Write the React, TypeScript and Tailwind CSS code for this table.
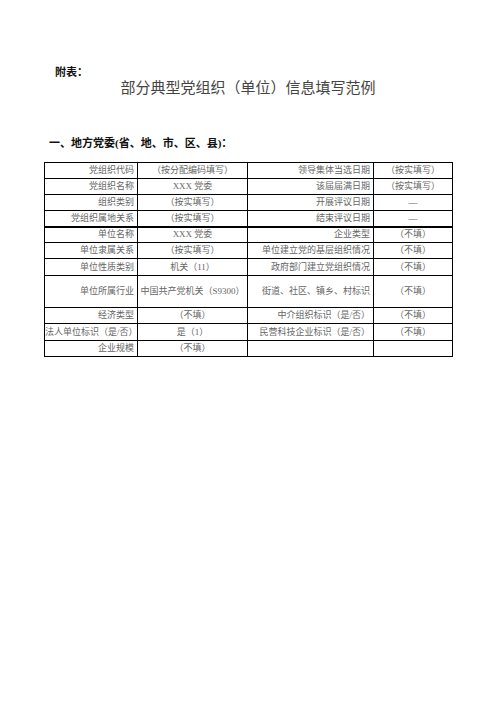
import React from "react";

type Row = { a: string; b: string; c: string; d: string; h: string; thick?: boolean };

const rows: Row[] = [
  { a: "党组织代码", b: "（按分配编码填写）", c: "领导集体当选日期", d: "（按实填写）", h: "h-[16px]" },
  { a: "党组织名称", b: "XXX 党委", c: "该届届满日期", d: "（按实填写）", h: "h-[16px]" },
  { a: "组织类别", b: "（按实填写）", c: "开展评议日期", d: "—", h: "h-[16px]" },
  { a: "党组织属地关系", b: "（按实填写）", c: "结束评议日期", d: "—", h: "h-[16px]" },
  { a: "单位名称", b: "XXX 党委", c: "企业类型", d: "（不填）", h: "h-[16px]", thick: true },
  { a: "单位隶属关系", b: "（按实填写）", c: "单位建立党的基层组织情况", d: "（不填）", h: "h-[16px]" },
  { a: "单位性质类别", b: "机关（11）", c: "政府部门建立党组织情况", d: "（不填）", h: "h-[17px]" },
  { a: "单位所属行业", b: "中国共产党机关（S9300）", c: "街道、社区、镇乡、村标识", d: "（不填）", h: "h-[32px]" },
  { a: "经济类型", b: "（不填）", c: "中介组织标识（是/否）", d: "（不填）", h: "h-[16px]" },
  { a: "法人单位标识（是/否）", b: "是（1）", c: "民营科技企业标识（是/否）", d: "（不填）", h: "h-[17px]" },
  { a: "企业规模", b: "（不填）", c: "", d: "", h: "h-[16px]" },
];

export default function App() {
  const cjk = { fontFamily: '"Liberation Serif", "Noto Sans CJK SC", serif' };
  return (
    <div className="w-[496px] h-[702px] bg-white text-black" style={cjk}>
      <div className="pt-[65px]">
        <div className="pl-[55px] text-[11px] leading-[14px] font-bold text-[#111]">附表：</div>
        <div className="text-center text-[15px] leading-[18px] text-[#444]">
          部分典型党组织（单位）信息填写范例
        </div>
        <div className="pl-[49px] mt-[39px] text-[11px] leading-[14px] font-bold text-[#111]">
          一、地方党委(省、地、市、区、县)：
        </div>
        <div className="pl-[44px] mt-[12px]">
          <table className="border-collapse w-[408px] table-fixed text-[9px] leading-none text-[#666]">
            <colgroup>
              <col className="w-[93px]" />
              <col className="w-[110px]" />
              <col className="w-[126px]" />
              <col className="w-[79px]" />
            </colgroup>
            <tbody>
              {rows.map((r, i) => (
                <tr key={i} className={r.h}>
                  <td className={`border border-black text-right pr-[3px] p-0 whitespace-nowrap ${r.thick ? "border-t-2" : ""}`}>{r.a}</td>
                  <td className={`border border-black text-center p-0 whitespace-nowrap ${r.thick ? "border-t-2" : ""}`}>{r.b}</td>
                  <td className={`border border-black text-right pr-[3px] p-0 whitespace-nowrap ${r.thick ? "border-t-2" : ""}`}>{r.c}</td>
                  <td className={`border border-black text-center p-0 whitespace-nowrap ${r.thick ? "border-t-2" : ""}`}>{r.d}</td>
                </tr>
              ))}
            </tbody>
          </table>
        </div>
      </div>
    </div>
  );
}
